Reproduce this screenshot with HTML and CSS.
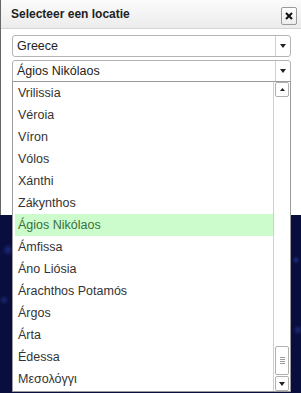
FILE: index.html
```html
<!DOCTYPE html>
<html>
<head>
<meta charset="utf-8">
<link rel="stylesheet" href="styles.css">
</head>
<body>
<div class="dialog">
  <div class="header">
    <span class="title">Selecteer een locatie</span>
    <button class="close" aria-label="close"><svg width="8" height="8" viewBox="0 0 8 8"><path d="M1 1L7 7M7 1L1 7" stroke="#111" stroke-width="2"/></svg></button>
  </div>
  <div class="content">
    <div class="select">
      <span class="value">Greece</span>
      <span class="arrow"><svg width="6" height="4" viewBox="0 0 6 4"><path d="M0 0H6L3 4Z" fill="#222"/></svg></span>
    </div>
    <div class="select open">
      <span class="value">Ágios Nikólaos</span>
      <span class="arrow"><svg width="6" height="4" viewBox="0 0 6 4"><path d="M0 0H6L3 4Z" fill="#222"/></svg></span>
      <div class="dropdown">
        <ul class="items">
          <li>Vrilissia</li>
          <li>Véroia</li>
          <li>Víron</li>
          <li>Vólos</li>
          <li>Xánthi</li>
          <li>Zákynthos</li>
          <li class="active">Ágios Nikólaos</li>
          <li>Ámfissa</li>
          <li>Áno Liósia</li>
          <li>Árachthos Potamós</li>
          <li>Árgos</li>
          <li>Árta</li>
          <li>Édessa</li>
          <li>Μεσολόγγι</li>
        </ul>
        <div class="scrollbar">
          <div class="sbtn"><svg width="5" height="3" viewBox="0 0 5 3"><path d="M0 3H5L2.5 0Z" fill="#222"/></svg></div>
          <div class="track"><div class="thumb"><span class="grip"></span><span class="grip"></span><span class="grip"></span><span class="grip"></span></div></div>
          <div class="sbtn"><svg width="6" height="4" viewBox="0 0 6 4"><path d="M0 0H6L3 4Z" fill="#222"/></svg></div>
        </div>
      </div>
    </div>
  </div>
</div>
</body>
</html>
```

FILE: styles.css
```css
html, body {
  margin: 0;
  padding: 0;
  overflow: hidden;
}
body {
  width: 301px;
  height: 393px;
  background-color: #0a0e3e;
  background-image:
    radial-gradient(circle at 8px 250px, #1a2a7a 0, transparent 6px),
    radial-gradient(circle at 4px 300px, #17256e 0, transparent 5px),
    radial-gradient(circle at 296px 260px, #1c2d80 0, transparent 4px),
    radial-gradient(circle at 298px 330px, #1a2a78 0, transparent 5px);
  font-family: "Liberation Sans", Arial, sans-serif;
}
.dialog {
  width: 301px;
  height: 215px;
  box-sizing: border-box;
  background: #fff;
  border-left: 1px solid #666;
}
.header {
  height: 28px;
  border-bottom: 1px solid #d4d4d4;
  background: linear-gradient(#fbfbfb, #ececec);
  display: flex;
  justify-content: space-between;
  align-items: flex-start;
  padding: 0 4px 0 10px;
}
.title {
  font-weight: bold;
  font-size: 12px;
  color: #222;
  line-height: 28px;
}
.close {
  margin-top: 7px;
  width: 16px;
  height: 18px;
  padding: 0;
  border: 1px solid #9a9a9a;
  border-radius: 2px;
  background: linear-gradient(#ffffff, #ededed);
  display: flex;
  align-items: center;
  justify-content: center;
}
.content {
  padding: 6px 10px 0 11px;
  display: flex;
  flex-direction: column;
  gap: 3px;
}
.select {
  position: relative;
  height: 22px;
  box-sizing: border-box;
  border: 1px solid #b4b4b4;
  border-radius: 3px;
  display: flex;
  align-items: center;
  font-size: 12.5px;
  color: #222;
}
.select.open {
  border-radius: 3px 3px 0 0;
}
.value {
  flex: 1;
  padding-left: 4px;
}
.arrow {
  width: 14px;
  height: 100%;
  border-left: 1px solid #d0d0d0;
  display: flex;
  align-items: center;
  justify-content: center;
}
.dropdown {
  position: absolute;
  top: 100%;
  left: -1px;
  right: -1px;
  height: 311px;
  box-sizing: border-box;
  border: 1px solid #9a9a9a;
  background: #fff;
  display: flex;
}
.items {
  list-style: none;
  margin: 0;
  padding: 0 0 0 2px;
  flex: 1;
}
.items li {
  height: 22px;
  line-height: 22px;
  padding-left: 3px;
  font-size: 12.5px;
  color: #333;
}
.items li.active {
  background: #ccfccc;
  color: #3b6e3b;
}
.scrollbar {
  width: 16px;
  border-left: 1px solid #cfcfcf;
  display: flex;
  flex-direction: column;
  align-items: center;
  padding: 0 0 0 0;
}
.sbtn {
  width: 14px;
  height: 15px;
  box-sizing: border-box;
  border: 1px solid #b0b0b0;
  border-radius: 2px;
  background: #fff;
  display: flex;
  align-items: center;
  justify-content: center;
}
.track {
  flex: 1;
  width: 14px;
  display: flex;
  flex-direction: column;
  justify-content: flex-end;
  padding-bottom: 1px;
}
.thumb {
  height: 29px;
  box-sizing: border-box;
  border: 1px solid #b0b0b0;
  border-radius: 2px;
  background: #fff;
  display: flex;
  flex-direction: column;
  align-items: center;
  justify-content: center;
  gap: 1px;
}
.grip {
  width: 5px;
  height: 1px;
  background: #9a9a9a;
}
```
